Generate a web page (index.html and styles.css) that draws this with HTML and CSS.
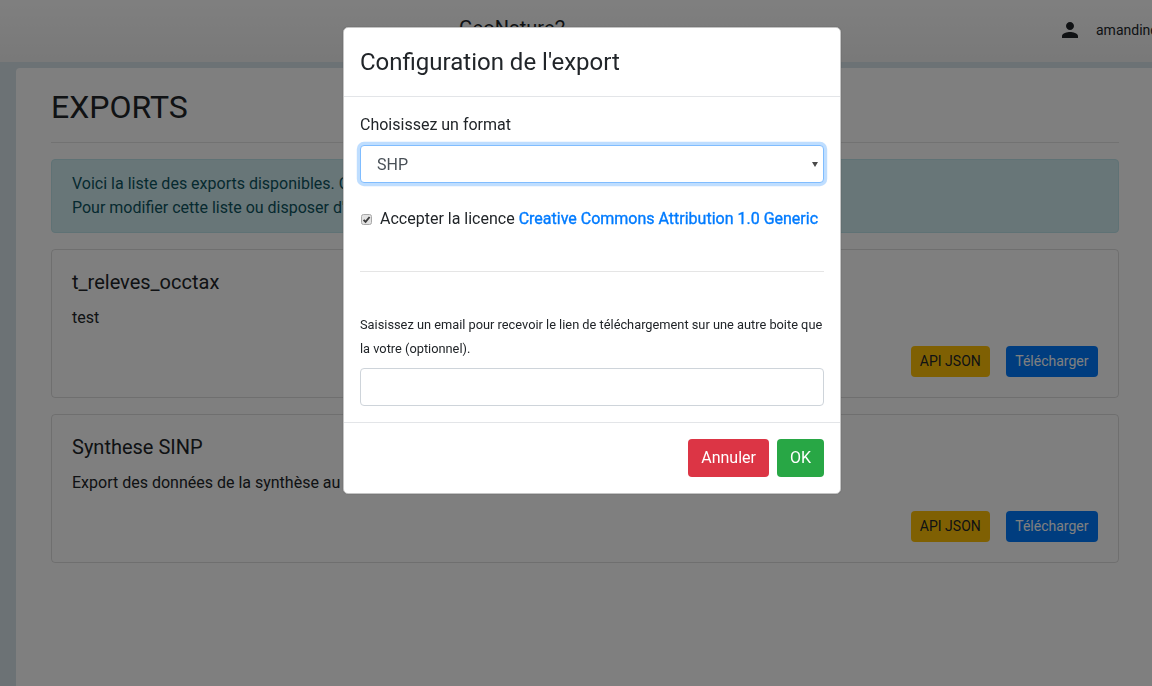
FILE: index.html
```html
<!DOCTYPE html>
<html lang="fr">
<head>
  <meta charset="UTF-8">
  <meta name="viewport" content="width=device-width, initial-scale=1.0">
  <title>GeoNature2 - Exports</title>
  <link rel="stylesheet" href="styles.css">
</head>
<body>
  <header class="navbar">
    <div class="navbar-title">GeoNature2</div>
    <div class="navbar-user">
      <svg class="user-icon" viewBox="0 0 24 24" width="24" height="24">
        <path d="M12 12c2.21 0 4-1.79 4-4s-1.79-4-4-4-4 1.79-4 4 1.79 4 4 4zm0 2c-2.67 0-8 1.34-8 4v2h16v-2c0-2.66-5.33-4-8-4z"/>
      </svg>
      <span class="user-name">amandine</span>
    </div>
  </header>

  <main class="page">
    <h2 class="page-title">EXPORTS</h2>
    <hr class="page-rule">

    <div class="alert">
      Voici la liste des exports disponibles. Cliquez sur un export.<br>
      Pour modifier cette liste ou disposer d'un nouvel export.
    </div>

    <div class="card">
      <h5 class="card-title">t_releves_occtax</h5>
      <p class="card-text">test</p>
      <div class="card-actions">
        <button class="btn btn-small btn-warning">API JSON</button>
        <button class="btn btn-small btn-primary">Télécharger</button>
      </div>
    </div>

    <div class="card">
      <h5 class="card-title">Synthese SINP</h5>
      <p class="card-text">Export des données de la synthèse au format SINP</p>
      <div class="card-actions">
        <button class="btn btn-small btn-warning">API JSON</button>
        <button class="btn btn-small btn-primary">Télécharger</button>
      </div>
    </div>
  </main>

  <div class="backdrop">
    <div class="modal">
      <div class="modal-header">
        <h4 class="modal-title">Configuration de l'export</h4>
      </div>
      <div class="modal-body">
        <label class="field-label" for="format">Choisissez un format</label>
        <div class="select-wrap">
          <select id="format" class="field field-select field-focus">
            <option>SHP</option>
            <option>CSV</option>
            <option>GeoJSON</option>
          </select>
        </div>

        <div class="licence">
          <svg class="licence-check" viewBox="0 0 13 13" width="13" height="13">
            <rect x="1.5" y="1.5" width="10" height="10" rx="2" fill="#e2e2e2" stroke="#a8a8a8"/>
            <path d="M3.6 6.8l2 2.1L9.6 4" fill="none" stroke="#3c3c3c" stroke-width="1.9"/>
          </svg>
          <span>Accepter la licence <a class="licence-link" href="#">Creative Commons Attribution 1.0 Generic</a></span>
        </div>

        <hr class="modal-rule">

        <label class="email-label" for="email">Saisissez un email pour recevoir le lien de téléchargement sur une autre boite que la votre (optionnel).</label>
        <input id="email" class="field" type="text">
      </div>
      <div class="modal-footer">
        <button class="btn btn-danger">Annuler</button>
        <button class="btn btn-success">OK</button>
      </div>
    </div>
  </div>
</body>
</html>
```

FILE: styles.css
```css
* {
  box-sizing: border-box;
}

html,
body {
  height: 100%;
}

body {
  margin: 0;
  overflow: hidden;
  background-color: #d8e4ea;
  color: #212529;
  font-family: Roboto, "Liberation Sans", sans-serif;
  font-size: 16px;
  line-height: 1.5;
  display: flex;
  flex-direction: column;
}

/* Top bar */
.navbar {
  height: 62px;
  flex-shrink: 0;
  display: flex;
  align-items: center;
  background: linear-gradient(#ffffff, #f2f2f2);
  white-space: nowrap;
}

.navbar-title {
  width: 599px;
  margin: 0 0 6px 459px;
  flex-shrink: 0;
  font-size: 20px;
}

.navbar-user {
  flex-shrink: 0;
  display: flex;
  align-items: center;
  margin-bottom: 2px;
  font-size: 14px;
}

.user-icon {
  fill: #212529;
  margin-right: 14px;
}

/* Page content */
.page {
  flex: 1;
  margin: 6px 0 0 16px;
  padding: 20px 33px 0 35px;
  background-color: #fff;
  border-top-left-radius: 4px;
}

.page-title {
  margin: 0;
  font-size: 32px;
  font-weight: 400;
  line-height: 38px;
}

.page-rule {
  margin: 16px 0;
  border: 0;
  border-top: 1px solid rgba(0, 0, 0, 0.1);
}

.alert {
  margin-bottom: 16px;
  padding: 12px 20px;
  border: 1px solid #bee5eb;
  border-radius: 4px;
  background-color: #d1ecf1;
  color: #0c5460;
}

.card {
  margin-bottom: 16px;
  padding: 20px;
  border: 1px solid rgba(0, 0, 0, 0.125);
  border-radius: 4px;
}

.card-title {
  margin: 0 0 12px;
  font-size: 20px;
  font-weight: 400;
  line-height: 24px;
}

.card-text {
  margin: 0 0 16px;
}

.card-actions {
  display: flex;
  justify-content: flex-end;
  gap: 16px;
}

/* Buttons */
.btn {
  padding: 6px 12px;
  border: 1px solid transparent;
  border-radius: 4px;
  font-family: inherit;
  font-size: 16px;
  line-height: 1.5;
  color: #fff;
}

.btn-small {
  padding: 4px 8px;
  font-size: 14px;
}

.btn-warning {
  background-color: #ffc107;
  color: #212529;
}

.btn-primary {
  background-color: #007bff;
  padding: 4px 8.5px;
}

.btn-danger {
  background-color: #dc3545;
}

.btn-success {
  background-color: #28a745;
}

/* Modal */
.backdrop {
  position: fixed;
  top: 0;
  left: 0;
  right: 0;
  bottom: 0;
  background-color: rgba(0, 0, 0, 0.5);
}

.modal {
  width: 498px;
  margin: 27px 0 0 343px;
  border: 1px solid #c4c4c4;
  border-radius: 4.8px;
  background-color: #fff;
  box-shadow: 0 0 1px rgba(0, 0, 0, 0.5);
}

.modal-header {
  padding: 16px;
  border-bottom: 1px solid #e3e5e8;
}

.modal-title {
  margin: 0;
  font-size: 24px;
  font-weight: 400;
  line-height: 36px;
}

.modal-body {
  padding: 16px;
}

.field-label {
  display: block;
  margin-bottom: 8px;
}

.field {
  display: block;
  width: 100%;
  height: 38px;
  padding: 6px 12px;
  border: 1px solid #ced4da;
  border-radius: 4px;
  background-color: #fff;
  color: #495057;
  font-family: inherit;
  font-size: 16px;
}

.select-wrap {
  position: relative;
}

/* small native looking arrow */
.select-wrap::after {
  content: "";
  position: absolute;
  top: 17px;
  right: 6px;
  border-left: 3px solid transparent;
  border-right: 3px solid transparent;
  border-top: 5px solid #4a4a4a;
}

.field-select {
  appearance: none;
  padding-left: 16px;
}

.field-focus {
  border-color: #80bdff;
  box-shadow: 0 0 0 3.2px rgba(0, 123, 255, 0.25);
  outline: 0;
}

.licence {
  display: flex;
  align-items: center;
  margin-top: 24px;
}

.licence-check {
  flex-shrink: 0;
  margin-right: 7px;
}

.licence-link {
  color: #007bff;
  -webkit-text-stroke: 0.35px #007bff;
  text-decoration: none;
}

.modal-rule {
  margin: 40px 0 41px;
  border: 0;
  border-top: 1px solid rgba(0, 0, 0, 0.1);
}

.email-label {
  display: block;
  margin-bottom: 7px;
  font-size: 12.8px;
  line-height: 24px;
}

.modal-footer {
  display: flex;
  justify-content: flex-end;
  gap: 8px;
  padding: 16px;
  border-top: 1px solid #e3e5e8;
}
```
